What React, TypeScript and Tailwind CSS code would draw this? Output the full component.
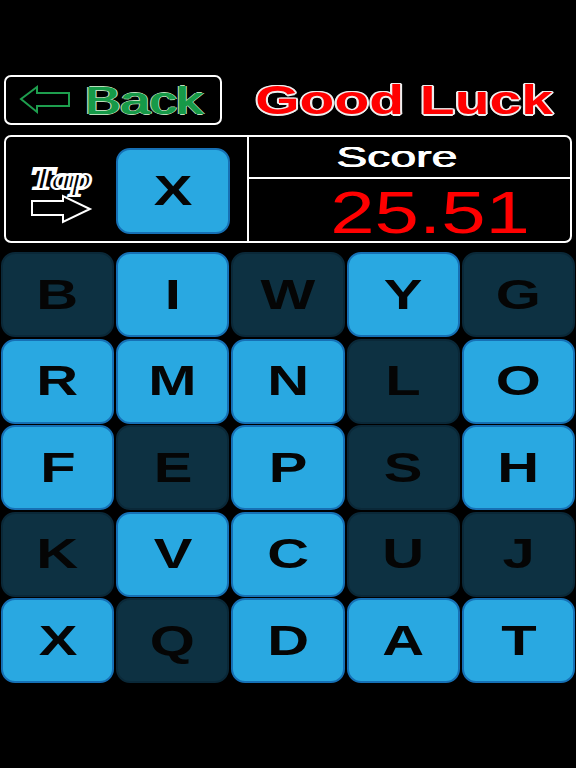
import React from "react";

const rows: [string, boolean][][] = [
  [["B", false], ["I", true], ["W", false], ["Y", true], ["G", false]],
  [["R", true], ["M", true], ["N", true], ["L", false], ["O", true]],
  [["F", true], ["E", false], ["P", true], ["S", false], ["H", true]],
  [["K", false], ["V", true], ["C", true], ["U", false], ["J", false]],
  [["X", true], ["Q", false], ["D", true], ["A", true], ["T", true]],
];

function Tile({ letter, light, className = "" }: { letter: string; light: boolean; className?: string }) {
  return (
    <div
      className={
        (light
          ? "bg-[#29a8e1] border-[#1670b5] "
          : "bg-[#0d3142] border-[#0a2838] ") +
        "border-2 rounded-[14px] flex items-center justify-center " +
        className
      }
    >
      <span className="inline-block font-['Liberation_Sans',sans-serif] font-bold text-[42px] leading-none text-[#050505] scale-x-[1.38]">
        {letter}
      </span>
    </div>
  );
}

export default function App() {
  return (
    <div className="w-[576px] h-[768px] bg-black flex flex-col pt-[75px] overflow-hidden">
      {/* Top row */}
      <div className="flex h-[50px] items-center">
        <div className="ml-[4px] w-[218px] h-[50px] border-2 border-white rounded-[7px] flex items-center">
          <svg width="52" height="30" viewBox="0 0 52 30" className="ml-[13px]">
            <polygon
              points="2,14 18,2 18,8 50,8 50,21 18,21 18,27"
              fill="none"
              stroke="#1e9e4e"
              strokeWidth="2"
              strokeLinejoin="miter"
            />
          </svg>
          <span className="ml-[14px] inline-block origin-left scale-x-[1.36] font-['Liberation_Sans',sans-serif] text-[39px] leading-none text-[#169a48] [text-shadow:0.8px_0_0_#169a48,-0.8px_0_0_#169a48,1.6px_0_0_#bdb,-1.6px_0_0_#bdb,0_1px_0_#bdb,0_-1px_0_#bdb]">
            Back
          </span>
        </div>
        <div className="flex-1 flex justify-center pl-[10px]">
          <span className="inline-block scale-x-[1.39] font-['Liberation_Sans',sans-serif] font-bold text-[41px] leading-none text-[#ff0000] [text-shadow:1.5px_0_0_#eee,-1.5px_0_0_#eee,0_1.5px_0_#eee,0_-1.5px_0_#eee,1px_1px_0_#eee,-1px_-1px_0_#eee,1px_-1px_0_#eee,-1px_1px_0_#eee]">
            Good Luck
          </span>
        </div>
      </div>

      {/* Info box */}
      <div className="mt-[10px] mx-[4px] h-[108px] border-2 border-white rounded-[7px] flex">
        <div className="w-[243px] border-r-2 border-white flex items-start pt-[11px] pl-[22px]">
          <div className="w-[88px] h-[86px] flex items-center">
            <svg width="66" height="68" viewBox="0 0 66 68">
              <text
                x="2"
                y="32"
                fontFamily="'Liberation Serif', serif"
                fontWeight="bold"
                fontStyle="italic"
                fontSize="32"
                fill="#000"
                stroke="#fff"
                strokeWidth="2.2"
                textLength="62"
                lengthAdjust="spacingAndGlyphs"
              >
                Tap
              </text>
              <polygon
                points="4,44 35,44 35,39 62,52 35,65 35,58 4,58"
                fill="none"
                stroke="#fff"
                strokeWidth="2"
              />
            </svg>
          </div>
          <Tile letter="X" light className="w-[114px] h-[86px]" />
        </div>
        <div className="flex-1 flex flex-col min-h-0">
          <div className="h-[42px] shrink-0 border-b-2 border-white flex items-center justify-center pr-[26px]">
            <span className="inline-block scale-x-[1.6] font-['Liberation_Sans',sans-serif] text-[29px] leading-none text-white [text-shadow:0.4px_0_0_#fff,-0.4px_0_0_#fff]">
              Score
            </span>
          </div>
          <div className="flex-1 min-h-0 flex justify-center items-start pt-[4px] pl-[42px]">
            <span className="inline-block scale-x-[1.33] font-['Liberation_Sans',sans-serif] text-[60px] leading-none text-[#ff0000]">
              25.51
            </span>
          </div>
        </div>
      </div>

      {/* Grid */}
      <div className="mt-[9px] px-[1px] grid grid-cols-5 gap-x-[2px] gap-y-[1.5px]">
        {rows.flat().map(([l, light], i) => (
          <Tile key={i} letter={l} light={light} className="h-[85px]" />
        ))}
      </div>
    </div>
  );
}
